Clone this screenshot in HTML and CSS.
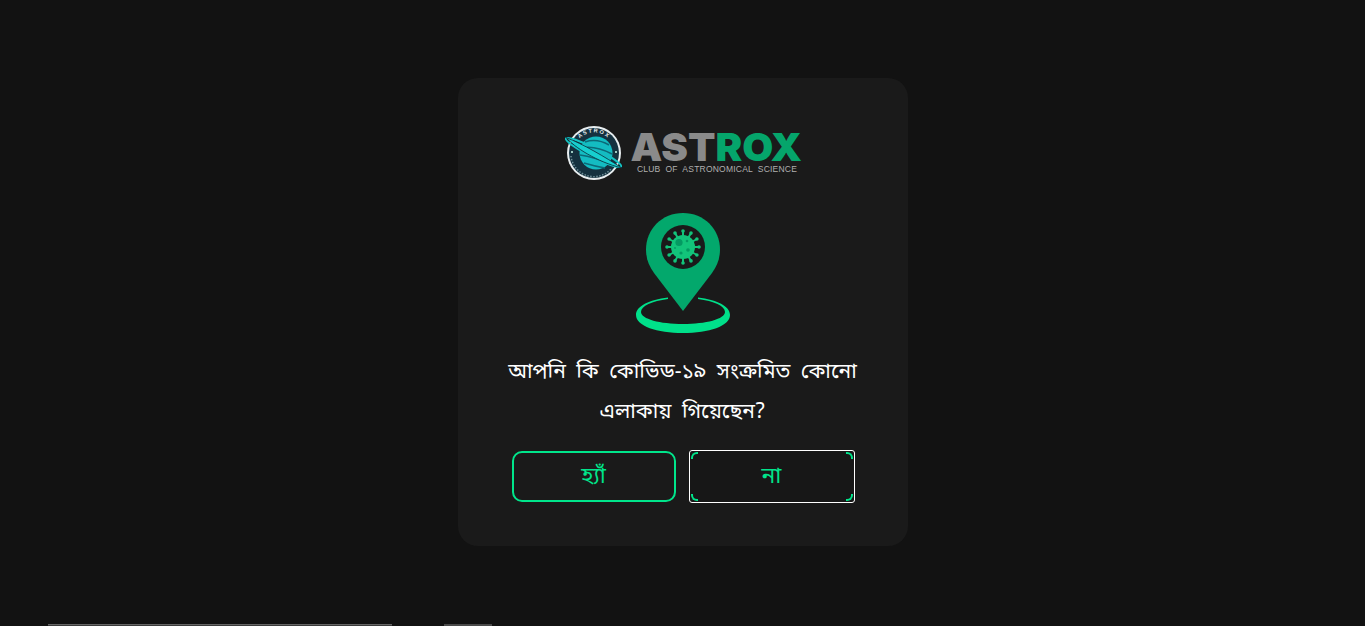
FILE: index.html
```html
<!DOCTYPE html>
<html lang="bn">
<head>
<meta charset="utf-8">
<title>Astrox</title>
<link rel="stylesheet" href="styles.css">
</head>
<body>
<main class="stage">
  <section class="card">
    <div class="logo">
      <svg class="logo-mark" viewBox="0 0 58 56" width="58" height="56" aria-hidden="true">
        <defs><path id="arc" d="M8.500 28a20.500 20.500 0 0 1 41 0"/></defs>
        <circle cx="29" cy="28" r="27" fill="#e8eef0"/>
        <circle cx="29" cy="28" r="25" fill="#15313f"/>
        <path d="M6 31a23 23 0 0 0 40 13" fill="none" stroke="#6f8f98" stroke-width="1.500" stroke-dasharray="1.500 1.500"/>
        <circle cx="7" cy="27" r="1" fill="#cfe"/><circle cx="51" cy="27" r="1" fill="#cfe"/>
        <ellipse cx="28.500" cy="27.500" rx="31" ry="4.500" transform="rotate(27 28.500 27.500)" fill="none" stroke="#14c4c4" stroke-width="2"/>
        <circle cx="31" cy="28" r="16.500" fill="#14bcc2"/>
        <path d="M20 17q12-4 24 3M16 23q14-3 31 6M15 30q14 2 31 9M19 38q10 3 21 5" stroke="#0c6a78" stroke-width="1.600" fill="none"/>
        <path d="M1 12.500C9 22 32 37 57 43 40 32 18 19 1 12.500Z" fill="#17cfcf" stroke="#0b2c38" stroke-width=".8"/>
        <text class="logo-arc"><textPath href="#arc" startOffset="50%">ASTROX</textPath></text>
      </svg>
      <div class="logo-words">
        <div class="logo-name"><span class="logo-gray">AST</span><span class="logo-green">ROX</span></div>
        <div class="logo-sub">CLUB OF ASTRONOMICAL SCIENCE</div>
      </div>
    </div>
    <svg class="pin" viewBox="0 0 94 120" width="94" height="120" aria-hidden="true">
      <path d="M32 84.500C13 87 0 93 0 102 0 113 21 120 47 120 73 120 94 113 94 102 94 93 81 87 62 84.500L62 86C78 88 89 93 89 99 89 106 70 111 47 111 24 111 5 106 5 99 5 93 16 88 32 86Z" fill="#00e08a"/>
      <path d="M47 0C26 0 10 16 10 36.500C10 46 13 53 18 60L47 98L76 60C81 53 84 46 84 36.500C84 16 68 0 47 0Z" fill="#03a86c"/>
      <circle cx="47" cy="34" r="22" fill="#1a1a1a"/>
      <g stroke="#12c47a" stroke-width="2">
        <path d="M31 34h32M47 18v32M33.100 26l27.800 16M33.100 42l27.800-16M39 20.100l16 27.800M39 47.900l16-27.800"/>
      </g>
      <g fill="#12c47a">
        <circle cx="63" cy="34" r="1.800"/><circle cx="60.900" cy="42" r="1.800"/><circle cx="55" cy="47.900" r="1.800"/><circle cx="47" cy="50" r="1.800"/><circle cx="39" cy="47.900" r="1.800"/><circle cx="33.100" cy="42" r="1.800"/>
        <circle cx="31" cy="34" r="1.800"/><circle cx="33.100" cy="26" r="1.800"/><circle cx="39" cy="20.100" r="1.800"/><circle cx="47" cy="18" r="1.800"/><circle cx="55" cy="20.100" r="1.800"/><circle cx="60.900" cy="26" r="1.800"/>
        <circle cx="47" cy="34" r="12"/>
      </g>
      <g fill="#049a62">
        <circle cx="43" cy="29.500" r="3.600"/><circle cx="51" cy="28" r="1.300"/><circle cx="52" cy="37" r="1.800"/><circle cx="45" cy="40" r="1.600"/><circle cx="39" cy="35" r=".9"/>
      </g>
    </svg>
    <h1 class="question">আপনি কি কোভিড-১৯ সংক্রমিত কোনো<br>এলাকায় গিয়েছেন?</h1>
    <div class="actions">
      <button class="btn btn-yes" type="button">হ্যাঁ</button>
      <button class="btn btn-no" type="button">না<i class="corner tl"></i><i class="corner tr"></i><i class="corner bl"></i><i class="corner br"></i></button>
    </div>
  </section>
</main>
<div class="edge">
  <span class="edge-long"></span>
  <span class="edge-short"></span>
</div>
</body>
</html>
```
FILE: styles.css
```css
html, body { margin: 0; padding: 0; height: 626px; overflow: hidden; background: #121212; }
body { font-family: "Noto Sans Bengali", "Lohit Bengali", "FreeSerif", "Noto Sans", sans-serif; }
.stage { height: 624px; display: flex; align-items: center; justify-content: center; }
.card { box-sizing: border-box; width: 450px; height: 468px; background: #1a1a1a; border-radius: 20px; padding: 47px 0 0; display: flex; flex-direction: column; align-items: center; }
.logo { display: flex; align-items: center; gap: 9px; height: 56px; margin-left: 1px; }
.logo-mark { display: block; overflow: visible; }
.logo-arc { font: 700 5.500px "Liberation Sans", sans-serif; fill: #e8eef0; text-anchor: middle; letter-spacing: 1.500px; }
.logo-words { display: flex; flex-direction: column; align-items: center; width: 170px; }
.logo-name { font: 900 38px/30px "Inter", sans-serif; transform: scaleX(1.055); white-space: nowrap; }
.logo-gray { color: #8a8a8a; }
.logo-green { color: #05a56b; }
.logo-sub { font: 400 8.500px/10px "Liberation Sans", sans-serif; color: #b0b0b0; word-spacing: 2.500px; letter-spacing: .22px; margin: 2px 0 0 1px; white-space: nowrap; }
.pin { display: block; margin-top: 32px; }
.question { margin: 20px 0 0; color: #fff; font-size: 21px; line-height: 40px; font-weight: 400; word-spacing: 5px; text-align: center; white-space: nowrap; }
.actions { display: flex; align-items: center; gap: 13px; margin: 17px 0 0 1px; }
.btn { box-sizing: border-box; position: relative; padding: 0; font: inherit; font-size: 23px; color: #00e58b; cursor: pointer; }
.btn-yes { width: 164px; height: 51px; background: #1a1a1a; border: 2px solid #00e58b; border-radius: 10px; }
.btn-no { width: 166px; height: 53px; background: #171717; border: 1px solid #fff; border-radius: 3px; }
.corner { position: absolute; width: 5px; height: 5px; border: 0 solid #00e58b; }
.tl { top: 1px; left: 1px; border-width: 2px 0 0 2px; border-top-left-radius: 6px; }
.tr { top: 1px; right: 1px; border-width: 2px 2px 0 0; border-top-right-radius: 6px; }
.bl { bottom: 1px; left: 1px; border-width: 0 0 2px 2px; border-bottom-left-radius: 6px; }
.br { bottom: 1px; right: 1px; border-width: 0 2px 2px 0; border-bottom-right-radius: 6px; }
.edge { display: flex; gap: 52px; padding-left: 48px; height: 2px; }
.edge-long { width: 344px; background: #3c3c3c; border-top: 1px solid #666; }
.edge-short { width: 48px; background: #4a4a4a; }
```
